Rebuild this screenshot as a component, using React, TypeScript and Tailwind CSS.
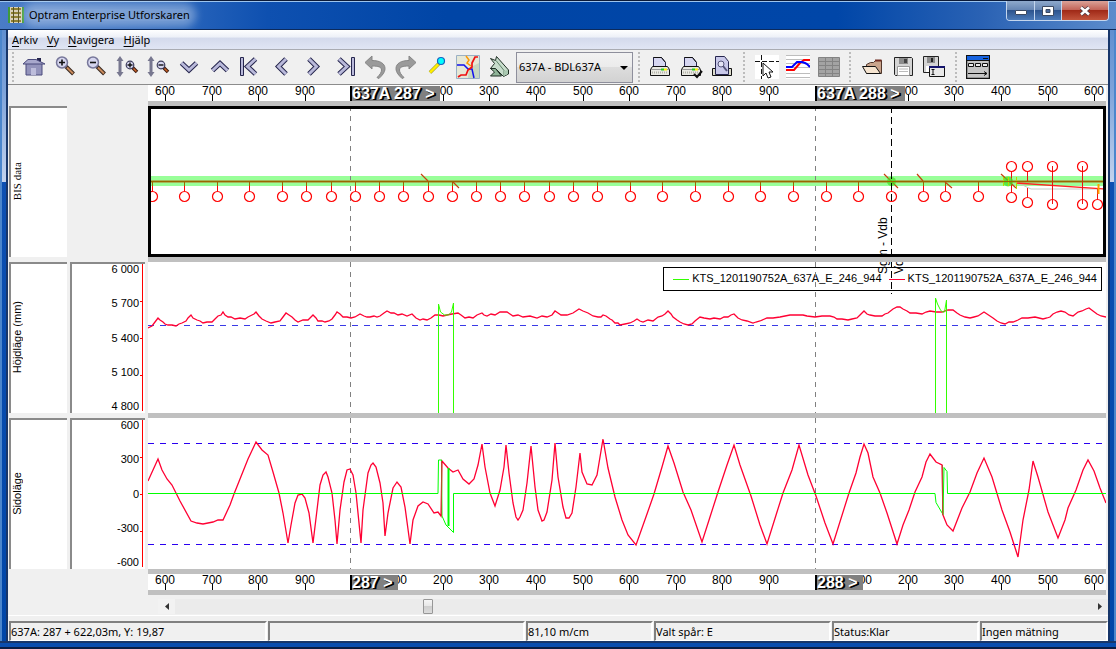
import React from 'react'
import { clsx } from 'clsx'

const rulerTicks = [
  { x: 17, label: '600' },
  { x: 64, label: '700' },
  { x: 110, label: '800' },
  { x: 157, label: '900' },
  { x: 249, label: '100' },
  { x: 295, label: '200' },
  { x: 341, label: '300' },
  { x: 388, label: '400' },
  { x: 435, label: '500' },
  { x: 481, label: '600' },
  { x: 528, label: '700' },
  { x: 574, label: '800' },
  { x: 621, label: '900' },
  { x: 714, label: '100' },
  { x: 760, label: '200' },
  { x: 806, label: '300' },
  { x: 853, label: '400' },
  { x: 900, label: '500' },
  { x: 946, label: '600' },
]

// poles below the track, x only
const poles = [
  152, 184, 217, 249, 282, 306, 331, 355, 379, 403, 428, 452, 476, 500, 524,
  549, 573, 597, 630, 662, 695, 728, 760, 793, 826, 858, 891, 923, 945, 978,
]

// poles in the station area: x, start, end, circles
const stationPoles = [
  { x: 1011, from: 171, to: 192, circles: [166, 197] },
  { x: 1027, from: 171, to: 181, circles: [166] },
  { x: 1027, from: 188, to: 197, circles: [202] },
  { x: 1052, from: 166, to: 204, circles: [166, 204] },
  { x: 1082, from: 166, to: 204, circles: [166, 204] },
  { x: 1097, from: 189, to: 199, circles: [204] },
]

const heightCurve =
  '148,328 152,326 155,322 158,318 160,320 163,322 165,324 168,325 172,325 176,326 179,324 182,323 186,321 188,318 191,315 193,318 197,320 200,321 203,323 207,322 212,322 215,319 218,316 221,315 223,312 225,315 228,317 231,317 235,319 240,318 245,319 248,317 252,315 254,314 256,312 259,316 262,319 266,321 271,323 275,322 280,321 283,317 286,313 289,315 292,317 295,320 298,322 303,320 308,320 311,317 313,315 316,318 318,321 322,321 325,322 329,321 332,319 335,315 337,312 340,314 343,317 347,317 351,318 355,317 360,314 364,316 367,317 370,317 374,316 377,317 380,316 384,313 387,311 391,313 394,313 398,315 402,314 407,316 412,314 416,318 420,320 423,319 427,320 431,318 435,315 439,315 443,316 447,315 452,314 458,313 461,315 465,318 469,317 473,318 477,315 482,313 484,315 487,316 491,314 495,315 500,312 507,312 510,314 513,316 518,315 523,317 530,316 537,318 542,316 547,317 552,315 555,311 558,313 561,315 567,315 573,313 576,311 579,309 583,311 588,313 593,316 598,317 601,317 603,315 606,316 610,319 612,320 615,323 618,323 620,325 625,324 630,323 634,321 637,319 640,321 643,322 648,320 653,321 658,317 662,316 665,314 668,311 671,314 673,317 677,320 680,322 684,324 688,325 692,324 695,321 700,317 704,318 710,319 714,318 720,319 724,317 728,317 731,315 734,314 738,318 742,320 747,321 753,323 756,322 760,321 767,318 773,318 780,317 785,316 790,315 794,315 799,315 803,315 807,316 815,317 822,316 830,316 834,317 837,319 842,319 848,320 852,319 857,318 860,315 864,311 867,314 870,315 875,316 882,316 885,314 888,313 893,309 897,307 900,307 903,309 907,311 910,313 916,313 922,314 926,312 930,311 936,312 942,312 948,310 953,310 957,313 960,315 965,317 970,318 974,317 978,316 981,314 984,312 987,314 990,316 993,318 997,321 1001,323 1005,324 1009,322 1013,322 1018,320 1022,318 1028,318 1035,317 1039,318 1043,319 1047,318 1050,317 1053,314 1057,312 1061,311 1065,312 1069,315 1073,316 1078,312 1082,311 1086,309 1089,308 1093,311 1097,314 1101,316 1106,317'

const sideCurve =
  '148,481 158,459 162,470 167,479 172,485 180,501 191,521 197,523 203,524 213,522 218,520 223,520 230,505 234,494 248,459 256,442 262,450 268,455 273,472 279,493 283,513 288,543 291,525 295,503 298,495 302,494 305,498 309,513 313,543 317,510 320,485 323,475 326,472 328,477 332,493 335,520 337,544 340,510 344,482 347,470 350,469 353,475 356,493 361,543 363,510 368,473 371,465 373,463 376,467 380,483 383,503 385,536 388,513 393,488 397,482 401,487 405,507 410,544 413,520 418,506 423,502 428,504 434,513 438,512 441,516 442,461 448,468 453,472 458,470 463,479 469,484 474,479 478,465 482,444 485,467 490,493 495,506 500,490 504,467 506,445 509,473 513,503 516,517 518,520 520,517 523,510 527,483 531,446 535,487 538,510 542,521 544,520 547,512 552,480 555,443 558,477 563,507 566,518 569,518 572,513 576,487 580,453 582,472 587,484 592,485 597,475 600,457 603,439 608,468 615,497 622,520 628,535 636,545 647,514 654,494 662,467 668,446 674,463 683,492 691,510 702,542 710,517 718,492 727,465 734,445 740,465 751,496 760,525 767,544 777,512 783,493 792,470 799,445 808,475 816,496 825,523 833,544 849,493 856,473 860,457 864,444 868,453 873,477 880,493 887,513 897,544 903,525 909,510 915,492 922,477 926,462 930,454 936,462 942,465 943,515 947,525 953,531 962,508 970,492 977,473 984,458 992,477 1002,510 1010,532 1018,557 1023,520 1029,490 1033,461 1038,477 1048,512 1058,538 1065,520 1068,508 1076,490 1083,470 1088,460 1094,471 1100,488 1106,503'

const INK = '#26264e'
const LILAC = '#b9b9da'

type IconProps = { children: React.ReactNode }

const Icon = ({ children }: IconProps) => (
  <svg width="24" height="24" viewBox="0 0 24 24" fill="none" aria-hidden="true">
    {children}
  </svg>
)

const Chevron = ({ d }: { d: string }) => (
  <>
    <path d={d} stroke={INK} strokeWidth="5" />
    <path d={d} stroke={LILAC} strokeWidth="3" />
  </>
)

const Lens = ({ plus }: { plus?: boolean }) => (
  <>
    <path d="M13 11.500l7.500 7.500" stroke="#3a2a20" strokeWidth="4" />
    <path d="M14 12.500l6 6" stroke="#c98a5c" strokeWidth="2" />
    <circle cx="9" cy="7.500" r="5.500" fill="#d5d5ee" stroke="#77779a" strokeWidth="1.500" />
    <path d={plus ? 'M6 7.500h6M9 4.500v6' : 'M6 7.500h6'} stroke="#111" strokeWidth="1.600" />
  </>
)

const StretchLens = ({ plus }: { plus?: boolean }) => (
  <>
    <path d="M5 1l3.500 5H6.500v11h2L5 22l-3.500-5h2V6h-2z" fill="#77778f" />
    <path d="M17.500 12.500l4.500 4.500" stroke="#3a1a10" strokeWidth="3.500" />
    <path d="M18.500 13.500l3 3" stroke="#d0662a" strokeWidth="1.500" />
    <circle cx="15" cy="10" r="3.800" fill="#d5d5ee" stroke="#3c3c5c" strokeWidth="1.200" />
    <path d={plus ? 'M12.500 10h5M15 7.500v5' : 'M12.500 10h5'} stroke="#111" strokeWidth="1.400" />
  </>
)

const Printer = () => (
  <>
    <path d="M5.500 12V2.500h8l4 5V12" fill="#d6d6f0" stroke="#26264e" />
    <path d="M5.500 2.500h8l4 5" stroke="#111" />
    <path d="M4.500 11.500h15l2 3v6h-19v-6z" fill="#e9e9e2" stroke="#111" />
    <path d="M3 14.500h18" stroke="#999" />
    <path d="M4 17.500h16" stroke="#b5b5ab" strokeWidth="2" strokeDasharray="1 1" />
    <path d="M13 14.500h3" stroke="#2c2" strokeWidth="2" />
    <path d="M16 14.500h3" stroke="#fe0" strokeWidth="2" />
  </>
)

const Floppy = () => (
  <>
    <path d="M3.500 2.500h17l1 1v17h-17l-1-1z" fill="#d4d4d4" stroke="#222" />
    <path d="M8 3h9v6H8z" fill="#8c8c8c" />
    <path d="M13 4h3v4h-3z" fill="#444" />
    <path d="M6.500 11.500h12v9h-12z" fill="#fff" stroke="#999" />
    <path d="M8 14h9M8 16.500h9" stroke="#bbb" />
  </>
)

const navTools = [
  {
    name: 'Hem',
    icon: (
      <>
        <path d="M15 3h4v5h-4z" fill="#26264e" />
        <path d="M4 8h16v12H4z" fill="#9393bb" stroke="#4b4b7c" />
        <path d="M1 9l5-4.500h8L23 9z" fill="#a8a8cc" stroke="#4b4b7c" />
        <path d="M9 13h5v7H9z" fill="#bdbddb" />
      </>
    ),
  },
  { name: 'Zooma in', icon: <Lens plus /> },
  { name: 'Zooma ut', icon: <Lens /> },
  { name: 'Zooma in höjd', icon: <StretchLens plus /> },
  { name: 'Zooma ut höjd', icon: <StretchLens /> },
  { name: 'Ned', icon: <Chevron d="M4.500 8l7.500 7 7.500-7" /> },
  { name: 'Upp', icon: <Chevron d="M4.500 15.500l7.500-7 7.500 7" /> },
  {
    name: 'Första',
    icon: (
      <>
        <path d="M1.500 2.500h3v18h-3z" fill={LILAC} stroke={INK} />
        <Chevron d="M16.500 4l-8 7.500 8 7.500" />
      </>
    ),
  },
  { name: 'Föregående', icon: <Chevron d="M16 4l-7.500 7.500L16 19" /> },
  { name: 'Nästa', icon: <Chevron d="M8 4l7.500 7.500L8 19" /> },
  {
    name: 'Sista',
    icon: (
      <>
        <Chevron d="M7 4l8 7.500L7 19" />
        <path d="M19.500 2.500h3v18h-3z" fill={LILAC} stroke={INK} />
      </>
    ),
  },
  {
    name: 'Ångra',
    icon: (
      <path
        d="M2 7.500L9 1v4.500c8 0 13 3 13 8 0 4-3 7-6 10l-2-1c3-3 4.500-5 4.500-7.500 0-3-3-4-9.500-4V14z"
        fill="#9a9a9a"
        stroke="#858585"
      />
    ),
  },
  {
    name: 'Gör om',
    icon: (
      <path
        d="M22 7.500L15 1v4.500c-8 0-13 3-13 8 0 4 3 7 6 10l2-1c-3-3-4.500-5-4.500-7.500 0-3 3-4 9.500-4V14z"
        fill="#9a9a9a"
        stroke="#858585"
      />
    ),
  },
  {
    name: 'Markör',
    icon: (
      <>
        <path d="M5 17.500l9-9" stroke="#8a8a20" strokeWidth="3.500" />
        <path d="M5 17.500l9-9" stroke="#ffee00" strokeWidth="2.500" />
        <circle cx="16" cy="6" r="3.500" fill="#0ff" stroke="#1560c0" strokeWidth="1.200" />
      </>
    ),
  },
  {
    name: 'Karta',
    icon: (
      <>
        <path d="M.5.5h23v23H.5z" fill="#e6e8d6" stroke="#9ab0c4" />
        <path d="M13 13l10-5v15H12z" fill="#c8d8c0" />
        <path d="M10 1l3 4-2 3 4 3" stroke="#f90" strokeWidth="1.500" />
        <path d="M1 10h7l4 4h4l2 9" stroke="#11e" strokeWidth="1.500" />
        <path d="M22 2h-3l-3 6v4l-4 3-2 5H5l-3 2" stroke="#e11" strokeWidth="1.700" />
      </>
    ),
  },
  {
    name: 'Bok',
    icon: (
      <>
        <path d="M3.500 13.500h5l6 7.500H3.500l4-4z" fill="#8fb498" stroke="#1f2f24" />
        <path d="M3.500 3.500l5 2 1-4L21.500 15v4l-5 2.500-8-8h-5l4-5z" fill="#c7dccb" stroke="#1f2f24" />
        <path d="M9 5.500l8 10v5.500" stroke="#5e8268" />
        <path d="M17 16l4-1v4l-4 2z" fill="#a9c8b0" />
      </>
    ),
  },
]

const printTools = [
  { name: 'Skriv ut', icon: <Printer /> },
  {
    name: 'Skriv ut markerat',
    icon: (
      <>
        <Printer />
        <path d="M15 19l3 3 5-6" stroke="#111" strokeWidth="2" />
      </>
    ),
  },
  {
    name: 'Förhandsgranska',
    icon: (
      <>
        <path d="M2.500 13.500h19v7h-19z" fill="#dcdccc" stroke="#111" />
        <path d="M5.500 1.500h9l4 5v13h-13z" fill="#c9c9ea" stroke="#26264e" />
        <circle cx="11" cy="9" r="3" fill="#e4e4f6" stroke="#55557a" />
        <path d="M13 11l4 5" stroke="#55557a" strokeWidth="2" />
      </>
    ),
  },
]

const viewTools = [
  {
    name: 'Pekare',
    icon: (
      <>
        <path d="M0 0h24v24H0z" fill="#fff" />
        <path d="M0 6.500h24" stroke="#111" strokeDasharray="5 2" />
        <path d="M6.500 0v24" stroke="#111" strokeDasharray="5 2" />
        <path d="M8 8v13l3-3 2 5 3-1-2-5h4z" fill="#fff" stroke="#111" />
      </>
    ),
  },
  {
    name: 'Kurvor',
    icon: (
      <>
        <path d="M0 0h24v24H0z" fill="#fff" />
        <path d="M0 .5h24M0 4.500h24M0 8.500h24M0 12.500h24M0 18.500h24M0 22.500h24" stroke="#bdbdbd" />
        <path d="M0 15h8l6-7 4-3h6" stroke="#f00" strokeWidth="2" />
        <path d="M0 12h6l5-5h5l3 1 2 1 3 3" stroke="#00f" strokeWidth="2" />
      </>
    ),
  },
  {
    name: 'Tabell',
    icon: (
      <>
        <path d="M1.500 2.500h21v19h-21z" fill="#a3a3a3" stroke="#838383" />
        <path d="M1 6.500h22M1 10.500h22M1 14.500h22M1 18.500h22M8.500 3v19M15.500 3v19" stroke="#838383" />
      </>
    ),
  },
]

const fileTools = [
  {
    name: 'Öppna',
    icon: (
      <>
        <path d="M6.500 9.500l4-2h3l2-2h6v13h-15z" fill="#c9a48c" stroke="#52382c" />
        <path d="M15 5.500h6.500" stroke="#6e2a20" strokeWidth="2" />
        <path d="M2.500 11.500h13l5 7h-14z" fill="#f5e4d0" stroke="#111" />
      </>
    ),
  },
  { name: 'Spara', icon: <Floppy /> },
  {
    name: 'Spara som',
    icon: (
      <>
        <path d="M1.500 1.500h15v16h-15z" fill="#d4d4d4" stroke="#222" />
        <path d="M5 2h8v6H5z" fill="#8c8c8c" />
        <path d="M9 3h2v4H9z" fill="#222" />
        <path d="M4 11h10v6H4z" fill="#fff" />
        <path d="M7.500 11.500h15v10h-15z" fill="#e8e8e8" stroke="#111" />
        <path d="M7 11h16v2H7z" fill="#15156e" />
        <path d="M9.500 14.500h3m-3 5h3m-1.500-5v5" stroke="#111" />
      </>
    ),
  },
]

const windowTools = [
  {
    name: 'Fönster',
    icon: (
      <>
        <path d="M.5.5h23v23H.5z" fill="#c6c6c6" stroke="#111" strokeWidth="1.500" />
        <path d="M1 1h22v4H1z" fill="#1663e0" />
        <path d="M1 5.500h22M17 3.500h5" stroke="#111" />
        <path d="M2.500 8.500h5v3h-5zM9.500 8.500h5v3h-5zM16.500 8.500h5v3h-5z" fill="#eee" stroke="#111" />
        <path d="M2 18.500h19m-3-2l3 2-3 2" stroke="#111" />
      </>
    ),
  },
]

type Tool = { name: string; icon: React.ReactNode }

const ToolGroup = ({ tools }: { tools: Tool[] }) => (
  <div className="flex">
    {tools.map((tool) => (
      <button
        key={tool.name}
        type="button"
        aria-label={tool.name}
        className="flex h-[33px] w-[31px] items-center justify-center"
      >
        <Icon>{tool.icon}</Icon>
      </button>
    ))}
  </div>
)

const Grip = () => (
  <span className="flex w-2 flex-col items-center gap-[2px]">
    {[0, 1, 2, 3, 4, 5, 6, 7].map((n) => (
      <span key={n} className="size-[2px] bg-[#bcbcbc]" />
    ))}
  </span>
)

const TitleBar = () => (
  <header className="flex h-[29px] items-start border-t border-[#0b1a38] bg-[linear-gradient(to_right,#4a7cc6_0%,#2d68bd_15%,#0e50b0_24%,#0045a6_40%,#0046a8_75%,#2a62b4_88%,#5c8ccc_100%)] pl-2 shadow-[inset_0_1px_0_#9cc4ee]">
    <div className="flex h-full items-center gap-[5px]">
      <svg width="16" height="16" viewBox="0 0 16 16" aria-hidden="true">
        <path d="M0 0h16v16H0z" fill="#d9d0b8" />
        <path d="M1 0v16M15 0v16" stroke="#3f9a3a" strokeWidth="2" />
        <path d="M3 2h10M3 6h10M3 10h10M3 14h10" stroke="#8f8030" strokeWidth="2" />
        <path d="M5.500 0v16M10.500 0v16" stroke="#5a5220" />
      </svg>
      <h1 className="rounded-full bg-white/35 text-[11px] leading-3 text-black shadow-[0_0_8px_6px_rgba(255,255,255,0.35)]">
        Optram Enterprise Utforskaren
      </h1>
    </div>
    <div className="mr-[7px] ml-auto flex h-5 overflow-hidden rounded-b border border-t-0 border-[#c4d6ee]">
      <button
        type="button"
        aria-label="Minimera"
        className="flex w-7 items-center justify-center border-r border-[#c4d6ee] bg-[linear-gradient(#8ea9cc_0%,#6887b4_45%,#2d548e_50%,#4b7ab8_100%)]"
      >
        <span className="mt-1 h-[5px] w-3 rounded-[1px] border border-[#3c4a62] bg-white" />
      </button>
      <button
        type="button"
        aria-label="Maximera"
        className="flex w-[27px] items-center justify-center border-r border-[#c4d6ee] bg-[linear-gradient(#8ea9cc_0%,#6887b4_45%,#2d548e_50%,#4b7ab8_100%)]"
      >
        <svg width="12" height="10" viewBox="0 0 12 10" aria-hidden="true">
          <path d="M.5.5h11v9H.5z" fill="#fff" stroke="#3c4a62" />
          <path d="M4 3.500h4v3H4z" fill="#4a6a9c" stroke="#3c4a62" />
        </svg>
      </button>
      <button
        type="button"
        aria-label="Stäng"
        className="flex w-[46px] items-center justify-center bg-[linear-gradient(#dba298_0%,#c4665a_45%,#a02a18_50%,#c2543c_100%)]"
      >
        <svg width="12" height="10" viewBox="0 0 12 10" aria-hidden="true">
          <path d="M2 1.500l8 7M10 1.500l-8 7" stroke="#4a3a44" strokeWidth="4" />
          <path d="M2 1.500l8 7M10 1.500l-8 7" stroke="#fff" strokeWidth="2.500" />
        </svg>
      </button>
    </div>
  </header>
)

const menu = [
  ['A', 'rkiv'],
  ['V', 'y'],
  ['N', 'avigera'],
  ['H', 'jälp'],
]

const MenuBar = () => (
  <nav className="flex h-5 items-center gap-[9px] border-b border-[#a9abb2] bg-[linear-gradient(#ffffff_0%,#eef1f8_35%,#d4daec_45%,#e0e5f4_100%)] pl-1">
    {menu.map(([key, rest]) => (
      <button key={key} type="button" className="text-[11px] leading-4">
        <span className="underline underline-offset-2">{key}</span>
        {rest}
      </button>
    ))}
  </nav>
)

const Toolbar = () => (
  <div className="flex h-[35px] items-center overflow-hidden border-b border-[#8c8c8c] pl-px">
    <Grip />
    <div className="w-px" />
    <ToolGroup tools={navTools} />
    <div className="relative ml-[2px]">
      <select
        aria-label="Bandel"
        className="h-[31px] w-[117px] appearance-none border border-[#8e8f9c] bg-[linear-gradient(#f2f2f2_0%,#ebebeb_50%,#dddddd_50%,#d2d2d2_100%)] pl-[2px] text-[11px]"
      >
        <option>637A - BDL637A</option>
      </select>
      <svg
        className="pointer-events-none absolute top-[14px] right-[5px]"
        width="8"
        height="4"
        viewBox="0 0 8 4"
        aria-hidden="true"
      >
        <path d="M0 0h8L4 4z" fill="#000" />
      </svg>
    </div>
    <div className="w-[2px]" />
    <Grip />
    <div className="w-px" />
    <ToolGroup tools={printTools} />
    <div className="w-[3px]" />
    <Grip />
    <div className="w-[3px]" />
    <ToolGroup tools={viewTools} />
    <div className="w-[2px]" />
    <Grip />
    <div className="w-[2px]" />
    <ToolGroup tools={fileTools} />
    <div className="w-[3px]" />
    <Grip />
    <div className="w-[2px]" />
    <ToolGroup tools={windowTools} />
  </div>
)

type RulerProps = {
  ticks: { x: number; label: string }[]
  flags: { x: number; label: string; width: number }[]
}

const Ruler = ({ ticks, flags }: RulerProps) => (
  <div className="relative h-[21px] overflow-hidden border-b-[5px] border-[#c0c0c0] bg-white">
    <svg className="h-4 w-full font-[Liberation_Sans,Arial,sans-serif]" aria-hidden="true">
      {ticks.map((tick) => (
        <g key={tick.x}>
          <text x={tick.x} y="10" textAnchor="middle" fontSize="12">
            {tick.label}
          </text>
          <path d={`M${tick.x}.5 10v6`} stroke="#000" />
        </g>
      ))}
    </svg>
    {flags.map((flag) => (
      <span
        key={flag.x}
        className="absolute top-px h-[15px] border-l-2 border-black bg-[#808080] font-[Liberation_Sans,Arial,sans-serif] text-base leading-[15px] font-bold whitespace-nowrap text-white [text-shadow:1px_1px_0_#000,2px_1px_0_#000]"
        style={{ left: flag.x, width: flag.width }}
      >
        {flag.label}
      </span>
    ))}
  </div>
)

const KmLines = () => (
  <path d="M350.500 106v151M815.500 106v151" stroke="#808080" strokeDasharray="5 5" />
)

// border between stations, runs from the track plan into the height plot
const StationBorder = () => (
  <g>
    <path d="M891.500 106v188" stroke="#000" strokeDasharray="7 4" />
    <text transform="translate(887 274) rotate(-90)" fontSize="12">
      Sgm - Vdb
    </text>
  </g>
)

const TrackPlan = () => (
  <div className="h-[156px] border-b-[5px] border-[#c0c0c0] bg-white">
    <div className="h-[151px] overflow-hidden border-[3px] border-black">
      <svg
        className="h-full w-full font-[Liberation_Sans,Arial,sans-serif]"
        role="img"
        aria-label="BIS data"
      >
        <g transform="translate(-151 -109)" fill="none">
          <path d="M151 181h2000" stroke="#99ff99" strokeWidth="10" />
          <KmLines />
          <path d="M151 181.500h2000" stroke="#a5b45a" strokeWidth="3" />
          {poles.map((x) => (
            <g key={x}>
              <path d={`M${x}.5 182v4`} stroke="#996600" />
              <path d={`M${x}.5 186v5`} stroke="#f00" />
              <circle cx={x + 0.5} cy="196.500" r="5" stroke="#f00" strokeWidth="1.200" />
            </g>
          ))}
          <path d="M1016 182l15 7h67" stroke="#c8c8c8" />
          <path d="M1016 183l90 6" stroke="#f22" strokeWidth="1.300" />
          {stationPoles.map((pole) => (
            <g key={`${pole.x}-${pole.from}`}>
              <path d={`M${pole.x}.5 ${pole.from}V${pole.to}`} stroke="#e11" />
              {pole.circles.map((y) => (
                <circle key={y} cx={pole.x + 0.5} cy={y + 0.5} r="5" stroke="#f00" strokeWidth="1.200" />
              ))}
            </g>
          ))}
          <path
            d="M421 174l7 7M453 182l6 6M884 174l14 14M917 174l6 7M945 182l7 6M1001 174l15 14"
            stroke="#c8400f"
            strokeWidth="1.200"
          />
          <circle cx="891.500" cy="181.500" r="4.500" fill="#3fe01f" fillOpacity="0.700" />
          <circle cx="1008" cy="181.500" r="5" fill="#3fe01f" fillOpacity="0.700" />
          <path d="M1003.500 177v9M1008.500 177v9M1016.500 177v12" stroke="#b8d800" />
          <path d="M1098.500 184v10" stroke="#ffa000" strokeWidth="2" />
          <path d="M151 181.500h2000" stroke="#996600" />
          <g fill="#000">
            <StationBorder />
          </g>
        </g>
      </svg>
    </div>
  </div>
)

const Legend = () => (
  <ul className="absolute top-[5px] right-1 flex h-6 items-center gap-[7px] border border-black bg-white pr-1 pb-[3px] pl-[9px] font-[Liberation_Sans,Arial,sans-serif] text-[11px] leading-3">
    {['bg-[#33ff00]', 'bg-[#ff0033]'].map((color) => (
      <li key={color} className="flex items-center gap-[3px]">
        <span className={clsx('mt-[3px] h-px w-4', color)} />
        KTS_1201190752A_637A_E_246_944
      </li>
    ))}
  </ul>
)

const HeightPlot = () => (
  <div className="relative h-[156px] overflow-hidden border-b-[5px] border-[#c0c0c0] bg-white">
    <Legend />
    <svg
      className="relative h-full w-full font-[Liberation_Sans,Arial,sans-serif]"
      role="img"
      aria-label="Höjdläge (mm)"
    >
      <g transform="translate(-148 -262)">
        <path d="M148 325.500h2000" stroke="#3a3ae6" strokeDasharray="6 6" />
        <g transform="translate(0 156)">
          <KmLines />
        </g>
        <StationBorder />
        <text transform="translate(903 274) rotate(-90)" fontSize="12">
          Vdb
        </text>
        <polyline points={heightCurve} fill="none" stroke="#ff0033" strokeWidth="1.300" />
        <path
          d="M438.500 414V304l2 8 4 3h4l3-3 2-9v111M935.500 414V298l2 6 3 6 2 2h2l2-12v114"
          fill="none"
          stroke="#33ff00"
        />
      </g>
    </svg>
  </div>
)

const SidePlot = () => (
  <div className="h-[156px] overflow-hidden border-b-[5px] border-[#c0c0c0] bg-white">
    <svg className="h-full w-full" role="img" aria-label="Sidoläge">
      <g transform="translate(-148 -418)" fill="none">
        <path d="M148 443.500h2000M148 544.500h2000" stroke="#2a00f0" strokeDasharray="6 6" />
        <g transform="translate(0 312)">
          <KmLines />
        </g>
        <polyline points={sideCurve} stroke="#ff0033" strokeWidth="1.300" />
        <path
          d="M148 493.500h290l.5-33.500h3l.5 56 4 9 7.500 7.500v-39H935l1 9 7 12 1-47 3 4 .5 22H2100"
          stroke="#00ff00"
        />
        <path d="M448.500 468v58" stroke="#00ff00" strokeWidth="2" />
        <path d="M441.500 461v55M942.500 465v50" stroke="#b8502a" />
      </g>
    </svg>
  </div>
)

type SideLabelProps = { text: string; serif?: boolean }

const SideLabel = ({ text, serif }: SideLabelProps) => (
  <div className="flex h-[151px] items-center border-t-2 border-l-2 border-[#8a8a8a] bg-white pb-[2px]">
    <span
      className={clsx(
        'rotate-180 text-[11px] leading-3 whitespace-nowrap [writing-mode:vertical-rl]',
        serif
          ? 'font-[Liberation_Serif,Times_New_Roman,serif]'
          : 'font-[Liberation_Sans,Arial,sans-serif]',
      )}
    >
      {text}
    </span>
  </div>
)

const AxisScale = ({ values }: { values: string[] }) => (
  <div className="flex h-[151px] border-t-2 border-l-2 border-[#8a8a8a] bg-white font-[Liberation_Sans,Arial,sans-serif]">
    <div className="flex flex-1 flex-col justify-between pr-px pb-[2px] text-right text-[11px] leading-[10px]">
      {values.map((value) => (
        <span key={value}>{value}</span>
      ))}
    </div>
    <svg className="h-full w-[5px]" aria-hidden="true">
      <path d="M2.500 0v147M0 37.500h2M0 74.500h2M0 111.500h2" stroke="#f00" />
    </svg>
  </div>
)

const ScrollRow = () => (
  <div className="mt-1 ml-[150px] flex h-[15px] items-center bg-[#ebebeb]">
    <button
      type="button"
      aria-label="Rulla vänster"
      className="flex h-[15px] w-[17px] items-center justify-center bg-[#f2f2f2]"
    >
      <svg width="4" height="7" viewBox="0 0 4 7" aria-hidden="true">
        <path d="M4 0v7L0 3.500z" fill="#333" />
      </svg>
    </button>
    <input
      type="range"
      aria-label="Position"
      min="0"
      max="1000"
      defaultValue="274"
      className="h-[15px] min-w-0 flex-1 appearance-none bg-transparent [&::-webkit-slider-thumb]:h-[15px] [&::-webkit-slider-thumb]:w-[10px] [&::-webkit-slider-thumb]:appearance-none [&::-webkit-slider-thumb]:rounded-[1px] [&::-webkit-slider-thumb]:border [&::-webkit-slider-thumb]:border-[#979797] [&::-webkit-slider-thumb]:bg-[linear-gradient(#f5f5f5_0%,#e6e6e6_50%,#cfcfcf_50%,#dcdcdc_100%)]"
    />
    <button
      type="button"
      aria-label="Rulla höger"
      className="flex h-[15px] w-[17px] items-center justify-center"
    >
      <svg width="4" height="7" viewBox="0 0 4 7" aria-hidden="true">
        <path d="M0 0v7l4-3.500z" fill="#333" />
      </svg>
    </button>
  </div>
)

const statusItems = [
  '637A: 287 + 622,03m, Y: 19,87',
  '',
  '81,10 m/cm',
  'Valt spår: E',
  'Status:Klar',
  'Ingen mätning',
]

const StatusBar = () => (
  <footer className="mt-px grid grid-cols-[258px_1fr_127px_177px_147px_128px] gap-px border-t border-white pt-[5px] pl-px">
    {statusItems.map((item, i) => (
      <div
        key={i}
        className="h-5 overflow-hidden border-2 border-b border-[#808080] border-r-white border-b-white text-[11px] leading-[17px] whitespace-nowrap"
      >
        {item}
      </div>
    ))}
  </footer>
)

const FrameSide = ({ right }: { right?: boolean }) => (
  <div
    className={clsx(
      'w-2 shrink-0 border-x-2 bg-[linear-gradient(#5f8fd0_0px,#7da3da_60px,#c3d3ee_152px,#0d50b2_152px,#0046a8_100%)]',
      right ? 'border-r-[#4b86cc] border-l-[#17366a]' : 'border-r-[#17366a] border-l-[#4b86cc]',
    )}
  />
)

const App = () => {
  return (
    <div className="flex min-h-screen flex-col overflow-hidden bg-[#0a4dae] font-[Noto_Sans,Open_Sans,sans-serif] text-black">
      <TitleBar />
      <div className="flex flex-1 border-t border-[#0c2a5c]">
        <FrameSide />
        <main className="min-w-0 flex-1 bg-[#f0f0f0]">
          <MenuBar />
          <Toolbar />
          <div className="grid grid-cols-[58px_75px_1fr] gap-x-[3px] pr-[2px] pl-px">
            <div className="flex flex-col gap-[5px] pt-[21px]">
              <SideLabel text="BIS data" serif />
              <SideLabel text="Höjdläge (mm)" />
              <SideLabel text="Sidoläge" />
            </div>
            <div className="flex flex-col gap-[5px] pt-[177px]">
              <AxisScale values={['6 000', '5 700', '5 400', '5 100', '4 800']} />
              <AxisScale values={['600', '300', '0', '-300', '-600']} />
            </div>
            <div className="min-w-0">
              <Ruler
                ticks={rulerTicks.filter((tick) => tick.label !== '100')}
                flags={[
                  { x: 202, label: '637A 287 >', width: 90 },
                  { x: 667, label: '637A 288 >', width: 90 },
                ]}
              />
              <TrackPlan />
              <HeightPlot />
              <SidePlot />
              <Ruler
                ticks={rulerTicks}
                flags={[
                  { x: 202, label: '287 >', width: 48 },
                  { x: 667, label: '288 >', width: 48 },
                ]}
              />
            </div>
          </div>
          <ScrollRow />
          <StatusBar />
        </main>
        <FrameSide right />
      </div>
      <div className="h-2 border-t-2 border-b-2 border-t-[#17366a] border-b-[#0a1c44] bg-[#0a4dae]" />
    </div>
  )
}

export default App
